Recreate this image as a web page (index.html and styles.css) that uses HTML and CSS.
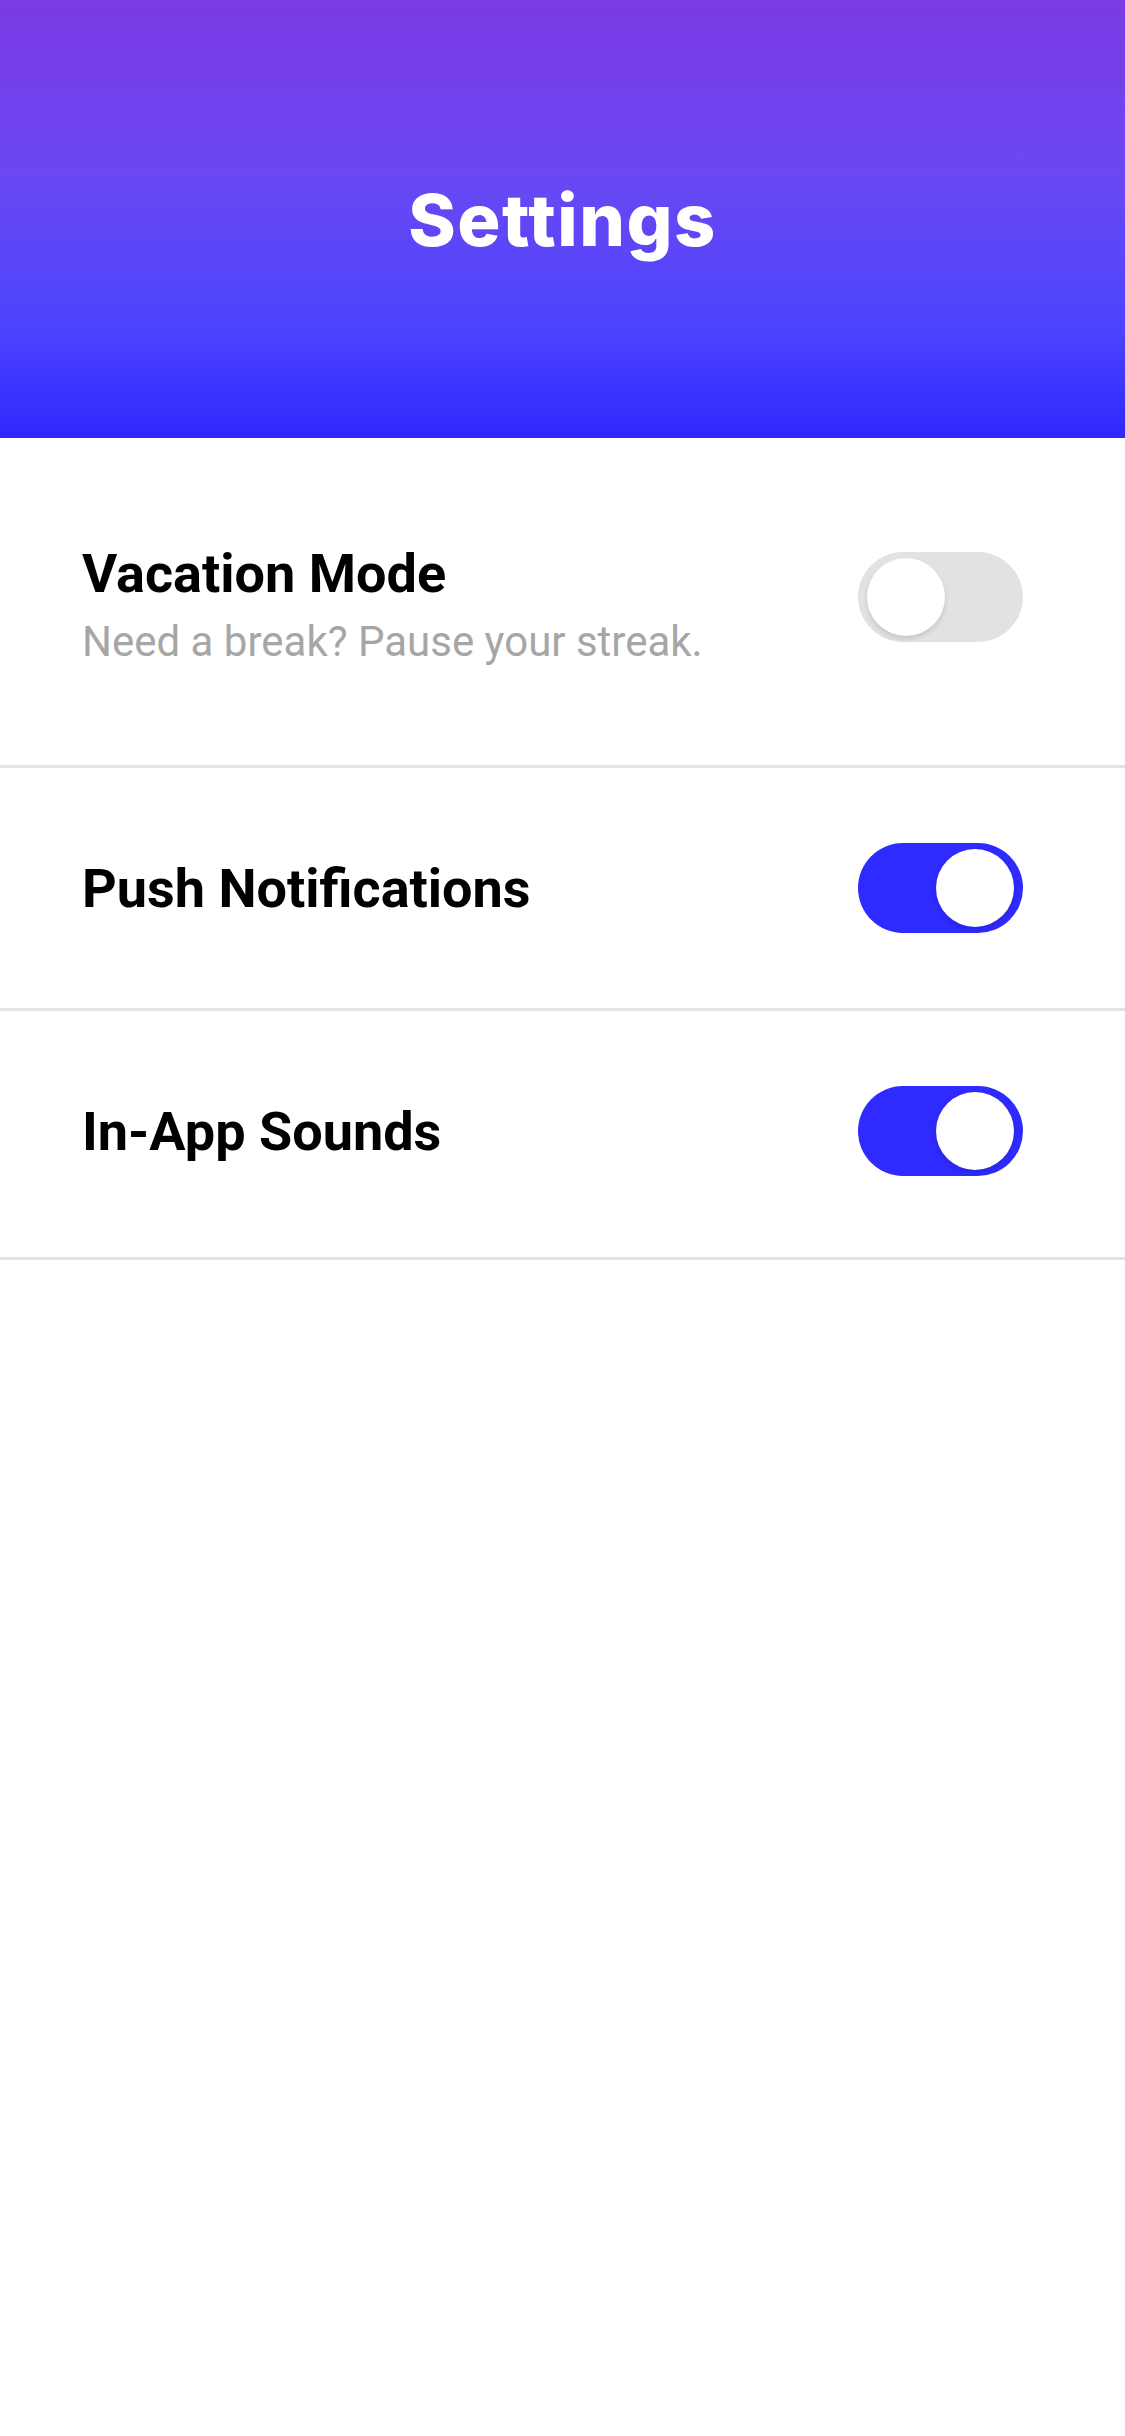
FILE: index.html
```html
<!DOCTYPE html>
<html lang="en">
<head>
<meta charset="utf-8">
<title>Settings</title>
<link rel="stylesheet" href="styles.css">
</head>
<body>
<div class="screen">
  <header class="header">
    <h1 class="header-title">Settings</h1>
  </header>
  <main class="list">
    <div class="row row--first">
      <div class="row-text">
        <div class="row-title">Vacation Mode</div>
        <div class="row-sub">Need a break? Pause your streak.</div>
      </div>
      <div class="toggle toggle--off toggle--top"><span class="knob"></span></div>
    </div>
    <div class="row">
      <div class="row-text">
        <div class="row-title">Push Notifications</div>
      </div>
      <div class="toggle toggle--on"><span class="knob"></span></div>
    </div>
    <div class="row row--last">
      <div class="row-text">
        <div class="row-title">In-App Sounds</div>
      </div>
      <div class="toggle toggle--on"><span class="knob"></span></div>
    </div>
  </main>
</div>
</body>
</html>
```
FILE: styles.css
```css
* { box-sizing: border-box; }
html, body { margin: 0; padding: 0; background: #ffffff; }
body { font-family: Roboto, "Liberation Sans", Arial, sans-serif; }
.screen { width: 1125px; min-height: 2436px; background: #ffffff; }
.header {
  height: 438px;
  background: linear-gradient(180deg, #7b3ae5 0%, #6a48f3 40%, #4c44fd 75%, #2e28ff 100%);
  display: flex;
  align-items: center;
  justify-content: center;
}
.header-title {
  margin: 0;
  color: #ffffff;
  font-family: Inter, "Noto Sans", sans-serif;
  font-weight: 800;
  font-size: 72px;
  letter-spacing: 1.5px;
  line-height: 1;
  padding-top: 2px;
}
.list { display: flex; flex-direction: column; }
.row {
  display: flex;
  align-items: center;
  justify-content: space-between;
  padding: 75px 102px 75px 82px;
  border-bottom: 3px solid #e3e3e3;
}
.row--first { align-items: flex-start; padding-top: 104px; padding-bottom: 99px; }
.row--last { padding-bottom: 81px; }
.row-text { display: flex; flex-direction: column; gap: 12px; }
.row-title {
  font-family: Roboto, "Liberation Sans", sans-serif;
  font-weight: 700;
  font-size: 54px;
  color: #000000;
  line-height: normal;
}
.row-sub {
  font-family: Roboto, "Liberation Sans", sans-serif;
  font-weight: 400;
  font-size: 42px;
  color: #a6a6a6;
  line-height: normal;
}
.toggle {
  width: 165px;
  height: 90px;
  border-radius: 45px;
  display: flex;
  align-items: center;
  padding: 0 9px;
  flex-shrink: 0;
}
.toggle--top { margin-top: 10px; }
.toggle--off { background: #e2e2e2; justify-content: flex-start; }
.toggle--on { background: #2f2aff; justify-content: flex-end; }
.knob {
  width: 78px;
  height: 78px;
  border-radius: 50%;
  background: #ffffff;
  box-shadow: 0 3px 5px rgba(0, 0, 0, 0.12);
}
```
